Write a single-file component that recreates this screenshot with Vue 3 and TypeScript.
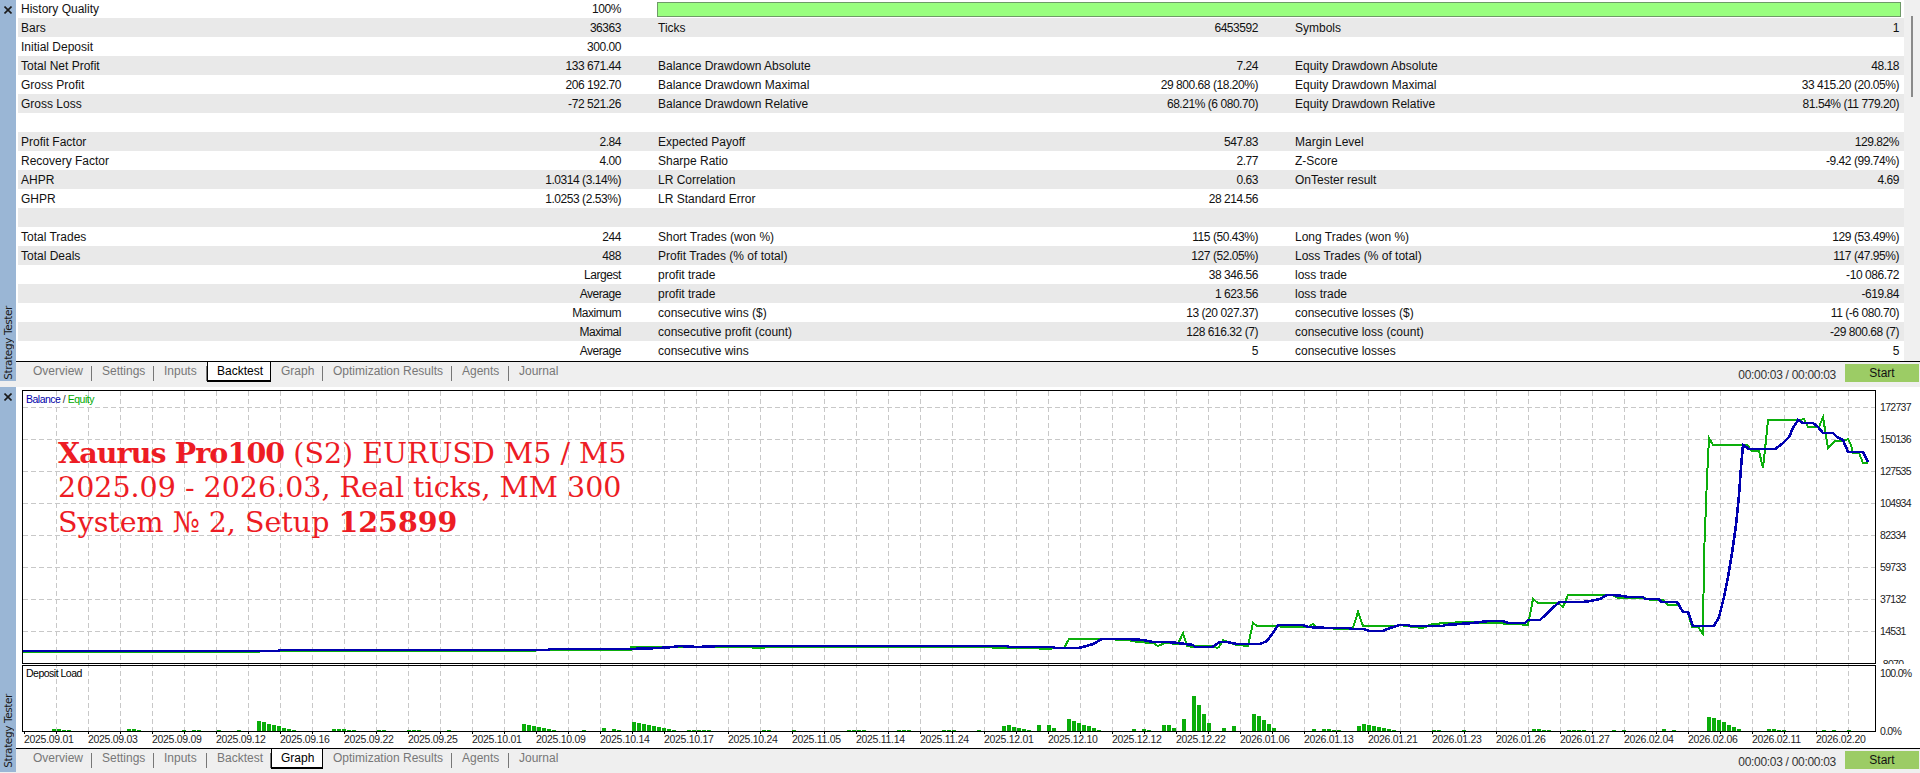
<script setup lang="ts">
type Cell = { label: string; value: string }
type Row = { first: Cell; second: Cell; third: Cell }

const empty: Cell = { label: "", value: "" }
const c = (label: string, value: string): Cell => ({ label, value })

const rows: Row[] = [
  { first: c("Bars", "36363"), second: c("Ticks", "6453592"), third: c("Symbols", "1") },
  { first: c("Initial Deposit", "300.00"), second: empty, third: empty },
  { first: c("Total Net Profit", "133 671.44"), second: c("Balance Drawdown Absolute", "7.24"), third: c("Equity Drawdown Absolute", "48.18") },
  { first: c("Gross Profit", "206 192.70"), second: c("Balance Drawdown Maximal", "29 800.68 (18.20%)"), third: c("Equity Drawdown Maximal", "33 415.20 (20.05%)") },
  { first: c("Gross Loss", "-72 521.26"), second: c("Balance Drawdown Relative", "68.21% (6 080.70)"), third: c("Equity Drawdown Relative", "81.54% (11 779.20)") },
  { first: empty, second: empty, third: empty },
  { first: c("Profit Factor", "2.84"), second: c("Expected Payoff", "547.83"), third: c("Margin Level", "129.82%") },
  { first: c("Recovery Factor", "4.00"), second: c("Sharpe Ratio", "2.77"), third: c("Z-Score", "-9.42 (99.74%)") },
  { first: c("AHPR", "1.0314 (3.14%)"), second: c("LR Correlation", "0.63"), third: c("OnTester result", "4.69") },
  { first: c("GHPR", "1.0253 (2.53%)"), second: c("LR Standard Error", "28 214.56"), third: empty },
  { first: empty, second: empty, third: empty },
  { first: c("Total Trades", "244"), second: c("Short Trades (won %)", "115 (50.43%)"), third: c("Long Trades (won %)", "129 (53.49%)") },
  { first: c("Total Deals", "488"), second: c("Profit Trades (% of total)", "127 (52.05%)"), third: c("Loss Trades (% of total)", "117 (47.95%)") },
  { first: c("", "Largest"), second: c("profit trade", "38 346.56"), third: c("loss trade", "-10 086.72") },
  { first: c("", "Average"), second: c("profit trade", "1 623.56"), third: c("loss trade", "-619.84") },
  { first: c("", "Maximum"), second: c("consecutive wins ($)", "13 (20 027.37)"), third: c("consecutive losses ($)", "11 (-6 080.70)") },
  { first: c("", "Maximal"), second: c("consecutive profit (count)", "128 616.32 (7)"), third: c("consecutive loss (count)", "-29 800.68 (7)") },
  { first: c("", "Average"), second: c("consecutive wins", "5"), third: c("consecutive losses", "5") }
]

const tabs = ["Overview", "Settings", "Inputs", "Backtest", "Graph", "Optimization Results", "Agents", "Journal"]

const dates = [
  "2025.09.01", "2025.09.03", "2025.09.09", "2025.09.12", "2025.09.16", "2025.09.22", "2025.09.25", "2025.10.01",
  "2025.10.09", "2025.10.14", "2025.10.17", "2025.10.24", "2025.11.05", "2025.11.14", "2025.11.24", "2025.12.01",
  "2025.12.10", "2025.12.12", "2025.12.22", "2026.01.06", "2026.01.13", "2026.01.21", "2026.01.23", "2026.01.26",
  "2026.01.27", "2026.02.04", "2026.02.06", "2026.02.11", "2026.02.20"
]

const yLabels = ["172737", "150136", "127535", "104934", "82334", "59733", "37132", "14531"]
const gridX = Array.from({ length: 57 }, (_, i) => 56 + i * 32)
const gridY = Array.from({ length: 8 }, (_, i) => 407 + i * 32)

// x, y pairs in page pixels, read off the reference
const balance = [
  22,651, 279,651, 279,650, 540,650, 549,650, 549,649, 631,649, 659,648, 673,647, 679,646, 698,647, 719,646, 1008,646, 1008,647,
  1053,647, 1055,648, 1078,648, 1083,647, 1093,644, 1102,639, 1128,639, 1143,640, 1153,642, 1168,642, 1178,643, 1193,645, 1195,647,
  1212,647, 1220,642, 1227,642, 1237,644, 1260,644, 1267,641, 1273,633, 1278,625, 1303,625, 1308,627, 1328,628, 1348,628, 1353,629,
  1363,629, 1370,631, 1383,631, 1390,628, 1400,625, 1408,625, 1410,626, 1443,626, 1445,625, 1460,624, 1473,623, 1488,621, 1503,621,
  1508,623, 1525,623, 1528,620, 1540,620, 1557,604, 1560,602, 1583,602, 1590,601, 1600,599, 1607,595, 1613,595, 1623,596, 1628,597,
  1643,597, 1645,599, 1658,599, 1662,602, 1677,602, 1679,605, 1683,612, 1688,612, 1693,626, 1714,626, 1719,617, 1724,597, 1728,577,
  1732,553, 1736,525, 1739,495, 1741,467, 1743,445, 1749,449, 1775,449, 1782,444, 1789,437, 1793,428, 1798,420, 1803,423, 1813,423,
  1818,427, 1823,433, 1833,433, 1837,437, 1843,440, 1848,452, 1863,452, 1868,462
]

const equity = [
  22,652, 259,652, 259,651, 524,651, 549,650, 631,650, 631,647, 673,647, 679,647, 698,647, 753,647, 753,648, 764,648, 764,647,
  993,647, 993,648, 1001,648, 1040,648, 1040,649, 1064,648, 1069,639, 1102,639, 1128,640, 1137,642, 1153,643, 1158,646, 1165,643,
  1178,644, 1183,633, 1187,646, 1193,647, 1195,646, 1213,646, 1217,648, 1219,647, 1223,640, 1228,642, 1237,645, 1248,646, 1253,623,
  1257,626, 1278,626, 1283,627, 1308,627, 1313,624, 1317,628, 1348,629, 1353,628, 1358,612, 1363,626, 1395,626, 1400,625, 1413,627,
  1423,628, 1432,624, 1463,622, 1490,623, 1515,624, 1528,625, 1533,599, 1538,603, 1558,603, 1563,607, 1568,595, 1612,595, 1618,598,
  1645,598, 1650,600, 1663,600, 1668,605, 1678,605, 1683,612, 1688,612, 1692,627, 1698,627, 1703,634, 1704,556, 1707,478, 1709,438,
  1713,445, 1747,445, 1752,451, 1759,451, 1763,468, 1766,440, 1768,420, 1800,420, 1804,419, 1808,427, 1819,427, 1823,417, 1828,448,
  1835,441, 1843,441, 1848,439, 1851,445, 1853,453, 1859,453, 1863,463, 1868,463
]

const toPoints = (list: number[]) => {
  const out: string[] = []
  for (let i = 0; i < list.length; i += 2) out.push(list[i] + "," + list[i + 1])
  return out.join(" ")
}
const balancePoints = toPoints(balance)
const equityPoints = toPoints(equity)

// deposit load bars: x, height
const load: [number, number][] = [
  [52,2],[57,2],[62,1],[67,1],[127,2],[132,2],[137,1],[182,1],[192,1],[197,1],[217,1],[237,1],
  [257,10],[262,9],[267,7],[272,6],[277,5],[282,3],[287,2],[292,1],[332,2],[337,2],[342,2],[347,1],[352,1],
  [377,1],[382,1],[407,1],[412,1],[417,1],[447,1],[522,7],[527,6],[532,5],[537,4],[542,3],[547,2],[552,1],
  [582,1],[602,3],[612,2],[617,1],[632,9],[637,8],[642,7],[647,6],[652,5],[657,4],[662,3],[667,2],[672,1],
  [687,1],[692,1],[697,1],[702,1],[707,1],[762,1],[767,1],[792,1],[847,1],[852,1],[857,1],[862,1],
  [897,1],[902,1],[907,1],[942,1],[947,1],[952,1],[977,1],[1002,5],[1007,6],[1012,4],[1017,3],[1022,2],[1027,1],
  [1037,6],[1047,6],[1052,3],[1067,12],[1072,10],[1077,8],[1082,6],[1087,5],[1092,3],[1097,1],
  [1132,2],[1142,2],[1147,1],[1162,6],[1167,6],[1172,3],[1182,12],[1192,35],[1197,26],[1202,17],[1207,8],
  [1222,3],[1232,5],[1252,17],[1257,15],[1262,11],[1267,7],[1272,3],[1312,2],[1322,2],[1327,2],[1332,1],[1337,1],
  [1357,5],[1362,7],[1367,6],[1372,5],[1377,4],[1382,3],[1387,2],[1392,1],[1432,1],[1437,1],[1462,1],
  [1532,2],[1537,2],[1542,1],[1547,1],[1567,1],[1572,1],[1577,1],[1582,1],[1612,1],[1622,1],[1662,2],[1672,1],
  [1707,14],[1712,13],[1717,11],[1722,9],[1727,6],[1732,4],[1737,2],[1767,2],[1772,2],[1777,1],[1782,1],
  [1822,1],[1832,1],[1847,1]
]
</script>

<template>
  <div class="page">
    <section class="panel top-panel">
      <aside class="side">
        <svg class="side-x" width="8" height="8" viewBox="0 0 8 8"><path d="M0.5 0.5L7.5 7.5M7.5 0.5L0.5 7.5" /></svg>
        <span class="side-title">Strategy Tester</span>
      </aside>
      <div class="report">
        <div class="table">
          <div class="row quality-row">
            <div class="cell"><span>History Quality</span><span class="num">100%</span></div>
            <div class="quality-bar"></div>
          </div>
          <div v-for="(row, i) in rows" :key="i" class="row">
            <div class="cell"><span>{{ row.first.label }}</span><span class="num">{{ row.first.value }}</span></div>
            <div class="cell"><span>{{ row.second.label }}</span><span class="num">{{ row.second.value }}</span></div>
            <div class="cell wide"><span>{{ row.third.label }}</span><span class="num">{{ row.third.value }}</span></div>
          </div>
        </div>
        <div class="scrollbar"><div class="thumb"></div></div>
      </div>
    </section>

    <div class="tabbar top-tabbar">
      <div class="tabs">
        <div v-for="t in tabs" :key="t" class="tab" :class="{ active: t === 'Backtest' }">{{ t }}</div>
      </div>
      <span class="timer">00:00:03 / 00:00:03</span>
      <button class="start">Start</button>
    </div>

    <section class="panel chart-panel">
      <aside class="side">
        <svg class="side-x" width="8" height="8" viewBox="0 0 8 8"><path d="M0.5 0.5L7.5 7.5M7.5 0.5L0.5 7.5" /></svg>
        <span class="side-title">Strategy Tester</span>
      </aside>
      <div class="chart-wrap">
        <svg class="chart" width="1898" height="358" viewBox="22 390 1898 358">
          <g class="grid">
            <line v-for="x in gridX" :key="'v' + x" :x1="x + 0.5" y1="391" :x2="x + 0.5" y2="731" />
            <line v-for="y in gridY" :key="'h' + y" x1="23" :y1="y + 0.5" x2="1876" :y2="y + 0.5" />
          </g>
          <polyline class="equity" :points="equityPoints" />
          <polyline class="balance" :points="balancePoints" />

          <rect v-for="b in load" :key="b[0]" class="bar" :x="b[0]" :y="731 - b[1]" width="4" :height="b[1]" />

          <text v-for="(l, i) in yLabels" :key="l" class="axis value" x="1880" :y="411 + i * 32">{{ l }}</text>
          <text class="axis value" x="1880" y="668">-8070</text>
          <rect x="1877" y="664" width="43" height="68" fill="#fff" />
          <text class="axis value" x="1880" y="677">100.0%</text>
          <text class="axis value" x="1880" y="735">0.0%</text>

          <path class="frame" d="M22.5 390.5H1875.5V663.5H22.5ZM22.5 665.5H1875.5V731.5H22.5Z" />
          <line v-for="x in gridX" :key="'t' + x" class="tick" :x1="x + 0.5" y1="732" :x2="x + 0.5" y2="734" />
          <line v-for="(d, i) in dates" :key="'d' + i" class="tick" :x1="24 + i * 64" y1="732" :x2="24 + i * 64" y2="734" />
          <text v-for="(d, i) in dates" :key="d + i" class="axis date" :x="24 + i * 64" y="743">{{ d }}</text>

          <text class="legend" x="26" y="403"><tspan fill="#0000aa">Balance</tspan><tspan fill="#333"> / </tspan><tspan fill="#00aa00">Equity</tspan></text>
          <text class="legend" x="26" y="677" fill="#000">Deposit Load</text>
        </svg>
        <div class="headline">
          <div><b class="tight">Xaurus Pro100</b> (S2) EURUSD M5 / M5</div>
          <div>2025.09 - 2026.03, Real ticks, MM 300</div>
          <div>System № 2, Setup <b>125899</b></div>
        </div>
      </div>
    </section>

    <div class="tabbar bottom-tabbar">
      <div class="tabs">
        <div v-for="t in tabs" :key="t" class="tab" :class="{ active: t === 'Graph' }">{{ t }}</div>
      </div>
      <span class="timer">00:00:03 / 00:00:03</span>
      <button class="start">Start</button>
    </div>
  </div>
</template>

<style>
html, body { overflow: hidden; background: #fff; }
</style>

<style scoped>
.page {
  width: 1920px;
  height: 773px;
  overflow: hidden;
  background: #fff;
  font-family: "Liberation Sans", Arial, sans-serif;
  font-size: 12px;
  color: #111;
}

.panel { display: flex; height: 361px; }

.side {
  width: 16px;
  background: #9ab6d5;
  position: relative;
  flex: none;
}
.top-panel .side { height: 381px; z-index: 2; }
.chart-panel .side { height: 385px; }

.side-x {
  position: absolute;
  left: 4px;
  top: 6px;
  display: block;
}
.side-x path {
  fill: none;
  stroke: #1a1a1a;
  stroke-width: 1.6;
}
.side-title {
  position: absolute;
  left: 1px;
  bottom: 1px;
  writing-mode: vertical-rl;
  transform: rotate(180deg);
  font-family: "DejaVu Sans", sans-serif;
  font-size: 10.5px;
  line-height: 14px;
  color: #1a1a1a;
  letter-spacing: -0.4px;
  white-space: nowrap;
}
.chart-panel .side-title { bottom: 4px; }

.report {
  flex: 1;
  display: flex;
  margin-left: 2px;
  min-width: 0;
}
.table { width: 1886px; flex: none; }
.row {
  height: 19px;
  display: flex;
  column-gap: 37px;
  padding: 1px 4px 0 3px;
  box-sizing: border-box;
  align-items: center;
  line-height: 18px;
  white-space: nowrap;
}
.row:nth-child(even) { background: #e9e9e9; }
.quality-row { height: 18px; padding-top: 0; }
.cell {
  width: 600px;
  display: flex;
  justify-content: space-between;
}
.cell.wide { width: 604px; }
.num { letter-spacing: -0.45px; }

.quality-bar {
  width: 1244px;
  height: 15px;
  box-sizing: border-box;
  margin-left: -1px;
  margin-right: -2px;
  background: #99ff7f;
  border: 1px solid #6f9a68;
}

.scrollbar {
  flex: 1;
  background: #f0f0f0;
  position: relative;
}
.thumb {
  position: absolute;
  left: 7px;
  top: 16px;
  width: 2px;
  height: 81px;
  background: #8a8a8a;
}

.tabbar {
  background: #efefef;
  border-top: 1px solid #000;
  box-sizing: border-box;
  display: flex;
  align-items: flex-start;
  padding-left: 18px;
  color: #777;
}
.top-tabbar { height: 26px; }
.bottom-tabbar { height: 25px; }
.tabs {
  display: grid;
  grid-template-columns: 74px 62px 53px 64px 52px 129px 57px 70px;
  height: 20px;
  flex: none;
}
.tab {
  height: 19px;
  line-height: 19px;
  padding-left: 10px;
  box-sizing: border-box;
  position: relative;
  white-space: nowrap;
}
.tab:first-child { padding-left: 15px; }
.tab::after {
  content: "";
  position: absolute;
  right: 0;
  top: 4px;
  height: 15px;
  width: 1px;
  background: #777;
}
.tab:last-child::after { display: none; }
.tab.active {
  background: #fff;
  color: #000;
  height: 20px;
  border: solid #000;
  border-width: 0 1px 2px 1px;
  padding-left: 9px;
}
.tab.active::after { display: none; }

.timer {
  margin-left: auto;
  margin-top: 6px;
  color: #333;
  font-size: 12px;
  letter-spacing: -0.3px;
  line-height: 14px;
}
.start {
  width: 74px;
  height: 18px;
  margin: 2px 1px 0 9px;
  padding: 0;
  border: 0;
  background: #9ccc65;
  color: #111;
  font: inherit;
  line-height: 18px;
}

.chart-wrap {
  position: relative;
  margin-left: 6px;
  padding-top: 3px;
  flex: 1;
  min-width: 0;
}
.chart { display: block; }
.grid line {
  stroke: #c8c8c8;
  stroke-width: 1;
  stroke-dasharray: 5 3;
  shape-rendering: crispEdges;
}
.equity {
  fill: none;
  stroke: #0cae0c;
  stroke-width: 2;
  shape-rendering: crispEdges;
}
.balance {
  fill: none;
  stroke: #0000b0;
  stroke-width: 2.6;
  shape-rendering: crispEdges;
}
.bar { fill: #0aad0a; }
.frame {
  fill: none;
  stroke: #000;
  stroke-width: 1;
  shape-rendering: crispEdges;
}
.tick {
  stroke: #000;
  stroke-width: 1;
  shape-rendering: crispEdges;
}
.axis { fill: #222; }
.value { font-size: 10.5px; letter-spacing: -0.7px; }
.date { font-size: 10.5px; letter-spacing: -0.3px; }
.legend { font-size: 10.5px; letter-spacing: -0.5px; }

.headline {
  position: absolute;
  left: 36px;
  top: 49px;
  color: #ed1c24;
  font-family: "DejaVu Serif", serif;
  font-size: 28.5px;
  line-height: 34px;
  white-space: nowrap;
}
.headline b { font-weight: bold; }
.headline .tight { letter-spacing: -0.9px; }
</style>
